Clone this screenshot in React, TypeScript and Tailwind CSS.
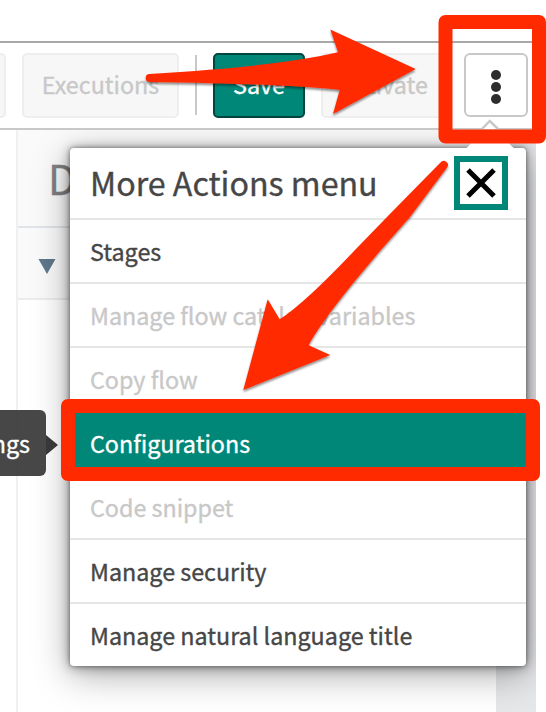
type MenuItem = { label: string; state: "enabled" | "disabled" | "active" };

const items: MenuItem[] = [
  { label: "Stages", state: "enabled" },
  { label: "Manage flow catalog variables", state: "disabled" },
  { label: "Copy flow", state: "disabled" },
  { label: "Configurations", state: "active" },
  { label: "Code snippet", state: "disabled" },
  { label: "Manage security", state: "enabled" },
  { label: "Manage natural language title", state: "enabled" },
];

const tone = {
  enabled: "text-[#464646]",
  disabled: "text-[#c8c8c8]",
  active: "bg-[#008777] text-white",
};

function Toolbar() {
  return (
    <div className="flex h-[89px] shrink-0 items-start border-y-2 border-t-[#a8a8a8] border-b-[#c8c8c8] pt-[10px]">
      <div className="h-[65px] w-[6px] shrink-0 rounded-r-[5px] border-2 border-l-0 border-[#eee] bg-[#f7f7f7]" />
      <button className="ml-4 flex h-[65px] w-[157px] shrink-0 items-center justify-center rounded-[5px] border-2 border-[#eee] bg-[#f7f7f7] pb-[2px] text-[#c8c8c8]">
        Executions
      </button>
      <div className="mt-[2px] ml-4 h-[60px] w-[2px] shrink-0 bg-[#c8c8c8]" />
      <button className="ml-4 flex h-[65px] w-[92px] shrink-0 items-center justify-center rounded-[5px] border-2 border-[#00463e] bg-[#008777] pb-[2px] text-white">
        Save
      </button>
      <button className="ml-4 flex h-[65px] w-[127px] shrink-0 items-center justify-center rounded-[5px] border-2 border-[#eee] bg-[#f7f7f7] pb-[2px] text-[#c8c8c8]">
        Activate
      </button>
      <button className="ml-4 flex h-16 w-16 shrink-0 flex-col items-center justify-center gap-[2px] rounded-[6px] border-2 border-[#c8c8c8] bg-white pt-1">
        <i className="h-[10px] w-[10px] rounded-full bg-[#2d2d2d]" />
        <i className="h-[10px] w-[10px] rounded-full bg-[#2d2d2d]" />
        <i className="h-[10px] w-[10px] rounded-full bg-[#2d2d2d]" />
      </button>
    </div>
  );
}

function ActionsMenu() {
  return (
    <div className="absolute top-[18px] left-[70px] w-[456px] rounded-[4px] bg-white shadow-[0_0_4px_rgba(0,0,0,0.4),0_1px_12px_rgba(0,0,0,0.4),0_8px_36px_rgba(0,0,0,0.35)]">
      <div className="flex h-[70px] items-center justify-between pr-[18px] pl-[20px]">
        <h1 className="pb-[2px] text-[32.2px] leading-none whitespace-nowrap text-[#464646]">More Actions menu</h1>
        <button className="flex h-[54px] w-[54px] shrink-0 items-center justify-center border-[6px] border-[#008777] bg-white">
          <svg width="32" height="32" viewBox="0 0 32 32" stroke="#000" strokeWidth="5">
            <path d="M3 3 29 29M29 3 3 29" />
          </svg>
        </button>
      </div>
      {items.map((item) => (
        <div
          key={item.label}
          className={`flex h-16 items-center border-t-2 border-[#e6e6e6] pt-[2px] pl-[20px] whitespace-nowrap last:rounded-b-[4px] ${tone[item.state]}`}
        >
          {item.label}
        </div>
      ))}
    </div>
  );
}

function Annotations() {
  return (
    <svg className="pointer-events-none absolute inset-0" width="546" height="712" viewBox="0 0 546 712">
      <defs>
        <filter id="drop" x="-10%" y="-10%" width="120%" height="130%">
          <feDropShadow dx="0" dy="2" stdDeviation="1.2" floodColor="#000" floodOpacity="0.45" />
        </filter>
      </defs>
      <path d="M482 129 489.8 121 498 129" fill="white" stroke="#c8c8c8" strokeWidth="2.5" />
      <path d="M464 149C468 148 470 144 474 140H506C510 144 512 148 517 149Z" fill="white" />
      <g fill="#ff2a00" filter="url(#drop)">
        <path d="M149.5 74Q273 67 338 52.3L330.3 29.5 415.7 69 333 114 339.7 90Q290 84 150 82A4 4 0 0 1 149.5 74Z" />
        <path d="M440.5 162.5 387 217 355 250Q305 303 279.7 319.3L267.7 299.3 243.3 390 330.3 355 308.7 345.3Q317 328 354 282L380 251 410 217 447 167.5A4 4 0 0 0 440.5 162.5Z" />
      </g>
      <g fill="none" stroke="#ff2a00" strokeWidth="14">
        <path d="M445.5 22H539V136.5H445.5Z" strokeLinejoin="round" />
        <path d="M68 406H533V474H68Z" strokeLinejoin="round" />
      </g>
    </svg>
  );
}

export default function App() {
  return (
    <div className="relative flex h-[712px] w-[546px] flex-col overflow-hidden bg-white pt-[41px] text-[23.3px] leading-none [-webkit-text-stroke:0.35px_currentColor] [font-family:'Noto_Sans_CJK_SC','Open_Sans',sans-serif]">
      <Toolbar />
      <main className="relative flex w-[536px] flex-1 overflow-hidden">
        <div className="w-[18px] shrink-0 border-r-2 border-[#f0f0f0]" />
        <section className="flex-1">
          <div className="flex h-[98px] items-center border-b-2 border-[#e0e4e8] bg-[#fafafa] pb-[2px] pl-[30px] text-[41px] text-[#808080]">
            D
          </div>
          <div className="flex h-[72px] items-center border-b-2 border-[#ececec] bg-[#fafafa] pl-[20px]">
            <svg width="18" height="15" viewBox="0 0 18 15" className="mt-[6px] fill-[#5f778c]">
              <path d="M.5 0h17L9 15Z" />
            </svg>
          </div>
        </section>
        <div className="w-10 shrink-0 bg-[#e6e7e9]" />
        <ActionsMenu />
        <div className="absolute top-[280px] left-0 flex h-[66px] items-center">
          <div className="flex h-full w-[46px] items-center justify-end overflow-hidden rounded-r-[6px] bg-[#333]/90 pt-[2px] pr-4 text-white">
            ngs
          </div>
          <svg width="12" height="20" viewBox="0 0 12 20" className="mt-1 fill-[#383838]">
            <path d="M0 0 12 10 0 20Z" />
          </svg>
        </div>
      </main>
      <Annotations />
    </div>
  );
}
